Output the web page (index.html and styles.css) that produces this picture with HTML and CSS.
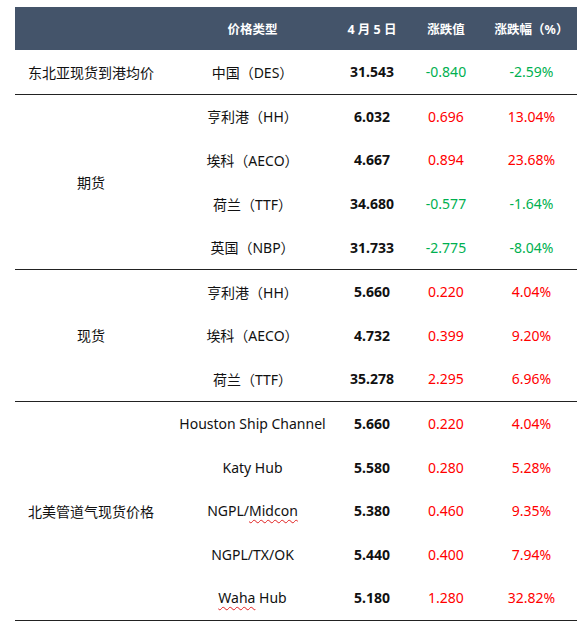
FILE: index.html
```html
<!DOCTYPE html>
<html lang="zh">
<head>
  <meta charset="UTF-8">
  <title>天然气价格</title>
  <link rel="stylesheet" href="styles.css">
</head>
<body>
  <table id="tabella">
    <colgroup>
      <col class="c1"><col class="c2"><col class="c3"><col class="c4"><col class="c5">
    </colgroup>
    <thead>
      <tr>
        <th></th>
        <th>价格类型</th>
        <th>4 月 5 日</th>
        <th>涨跌值</th>
        <th>涨跌幅（%）</th>
      </tr>
    </thead>
    <tbody>
      <tr class="fine">
        <td>东北亚现货到港均价</td>
        <td>中国（DES）</td>
        <td class="num">31.543</td>
        <td class="giu">-0.840</td>
        <td class="giu">-2.59%</td>
      </tr>
    </tbody>
    <tbody>
      <tr>
        <td rowspan="4" class="gruppo">期货</td>
        <td>亨利港（HH）</td>
        <td class="num">6.032</td>
        <td class="su">0.696</td>
        <td class="su">13.04%</td>
      </tr>
      <tr>
        <td>埃科（AECO）</td>
        <td class="num">4.667</td>
        <td class="su">0.894</td>
        <td class="su">23.68%</td>
      </tr>
      <tr>
        <td>荷兰（TTF）</td>
        <td class="num">34.680</td>
        <td class="giu">-0.577</td>
        <td class="giu">-1.64%</td>
      </tr>
      <tr class="fine">
        <td>英国（NBP）</td>
        <td class="num">31.733</td>
        <td class="giu">-2.775</td>
        <td class="giu">-8.04%</td>
      </tr>
    </tbody>
    <tbody>
      <tr>
        <td rowspan="3" class="gruppo">现货</td>
        <td>亨利港（HH）</td>
        <td class="num">5.660</td>
        <td class="su">0.220</td>
        <td class="su">4.04%</td>
      </tr>
      <tr>
        <td>埃科（AECO）</td>
        <td class="num">4.732</td>
        <td class="su">0.399</td>
        <td class="su">9.20%</td>
      </tr>
      <tr class="fine">
        <td>荷兰（TTF）</td>
        <td class="num">35.278</td>
        <td class="su">2.295</td>
        <td class="su">6.96%</td>
      </tr>
    </tbody>
    <tbody>
      <tr>
        <td rowspan="5" class="gruppo">北美管道气现货价格</td>
        <td>Houston Ship Channel</td>
        <td class="num">5.660</td>
        <td class="su">0.220</td>
        <td class="su">4.04%</td>
      </tr>
      <tr>
        <td>Katy Hub</td>
        <td class="num">5.580</td>
        <td class="su">0.280</td>
        <td class="su">5.28%</td>
      </tr>
      <tr>
        <td>NGPL/<span class="ondulato">Midcon</span></td>
        <td class="num">5.380</td>
        <td class="su">0.460</td>
        <td class="su">9.35%</td>
      </tr>
      <tr>
        <td>NGPL/TX/OK</td>
        <td class="num">5.440</td>
        <td class="su">0.400</td>
        <td class="su">7.94%</td>
      </tr>
      <tr class="fine">
        <td><span class="ondulato">Waha</span> Hub</td>
        <td class="num">5.180</td>
        <td class="su">1.280</td>
        <td class="su">32.82%</td>
      </tr>
    </tbody>
  </table>
</body>
</html>
```

FILE: styles.css
```css
html, body {
  margin: 0;
  padding: 0;
  background: white;
  font-family: "Noto Sans", "Noto Sans CJK SC", sans-serif;
  color: #111;
}

body {
  padding: 7px 10px 0 15px;
}

#tabella {
  width: 562px;
  border-collapse: collapse;
  table-layout: fixed;
  font-size: 14px;
}

.c1 { width: 152px; }
.c2 { width: 171px; }
.c3 { width: 68px; }
.c4 { width: 80px; }
.c5 { width: 91px; }

th {
  height: 43px;
  padding: 0;
  background: #44546a;
  color: white;
  font-size: 12.5px;
  font-weight: bold;
  text-align: center;
}

td {
  height: 43.6px;
  padding: 0;
  text-align: center;
  white-space: nowrap;
}

tr.fine td,
td.gruppo {
  border-bottom: 1px solid #222;
}

.num {
  font-weight: bold;
}

.su { color: #ff0000; }
.giu { color: #00b050; }

.ondulato {
  text-decoration: underline wavy #e02020;
  text-decoration-thickness: 1px;
  text-underline-offset: 3px;
}
```
